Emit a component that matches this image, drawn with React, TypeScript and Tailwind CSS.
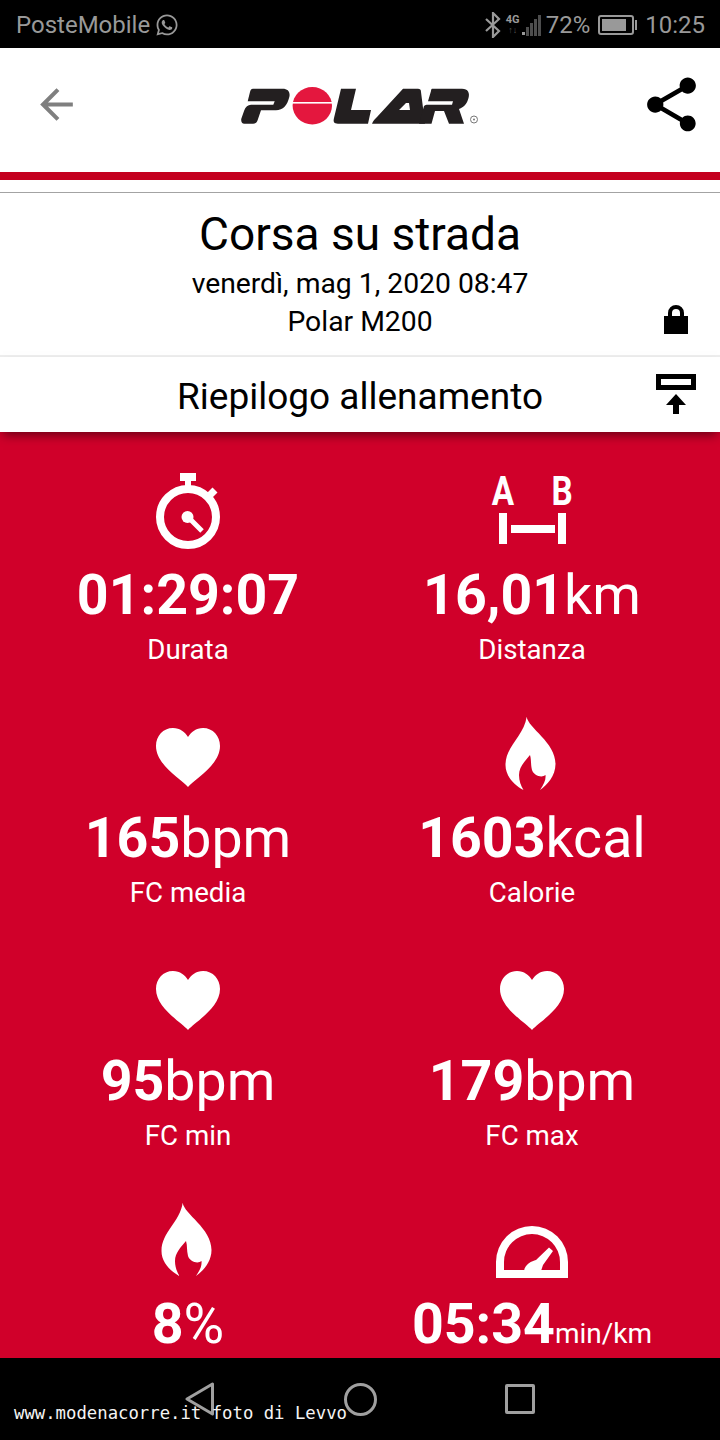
import React from 'react';
import { FaWhatsapp } from 'react-icons/fa';

const Stopwatch = () => (
  <svg viewBox="0 0 80 80" className="w-20 h-20" fill="none">
    <circle cx="40" cy="46" r="28" stroke="white" strokeWidth="8" />
    <rect x="32" y="2" width="16" height="8" fill="white" />
    <rect x="37" y="9" width="6" height="9" fill="white" />
    <path d="M60 26l7-7" stroke="white" strokeWidth="7" />
    <circle cx="39.500" cy="46" r="6" fill="white" />
    <path d="M40 46l14 14" stroke="white" strokeWidth="5" />
  </svg>
);

const Distance = () => (
  <svg viewBox="0 0 80 80" className="w-20 h-20 overflow-visible">
    <text transform="translate(11 34) scale(0.9 1.1)" textAnchor="middle" fill="white" fontFamily="Roboto, sans-serif" fontWeight="700" fontSize="37">A</text>
    <text transform="translate(70 34) scale(0.9 1.1)" textAnchor="middle" fill="white" fontFamily="Roboto, sans-serif" fontWeight="700" fontSize="37">B</text>
    <rect x="7" y="42" width="8" height="31" fill="white" />
    <rect x="66" y="42" width="8" height="31" fill="white" />
    <rect x="19" y="54" width="44" height="8" fill="white" />
  </svg>
);

const Heart = () => (
  <svg viewBox="0 0 80 80" className="w-20 h-20">
    <path fill="white" d="M40 73C33 65 8 51 8 32C8 22 15 14 25 14C32 14 37 18 40 23C43 18 48 14 55 14C65 14 72 22 72 32C72 51 47 65 40 73Z" />
  </svg>
);

const Flame = () => (
  <svg viewBox="0 0 80 80" className="w-20 h-20">
    <path fill="white" d="M34.700 2.700C36 14 63.500 28 63.500 50C63.500 62 55 71 48 76C52 70 54 66 53.500 61C50 64 42 62 40 56C38.500 50 39.500 46 38 41C33 47 27 53 27 61C27 67 29 72 31.500 76C22 71 13.500 62 13.500 51C13.500 32 32 22 34.700 2.700Z" />
  </svg>
);

const Gauge = () => (
  <svg viewBox="0 0 80 80" className="w-20 h-20">
    <path fill="white" fillRule="evenodd" d="M4 78V62A36 36 0 0 1 76 62V78ZM12 70H68V62A28 28 0 0 0 12 62Z" />
    <path fill="white" d="M32 71C33 64 40 61 44 60L57 47.500L61 51L51 65L49 71Z" />
  </svg>
);

const PolarLogo = () => (
  <svg viewBox="0 0 240 40" className="w-[240px] h-10 mt-1">
    <path
      fill="#231f20"
      d="M11 2.700H42.700C48 2.700 50.500 6 49.300 11C47.500 19 43 24.300 36 24.300H21L17.500 34.500C16.700 37 15 37.700 13 37.700H4.300C2 37.700 .8 35.500 1.300 32.700L4.300 24.300C5.500 21 8 18.700 11 18.700H33.300L34.700 15.300H7.700L10 6C10.500 4 11 2.700 13 2.700Z"
    />
    <ellipse cx="72.300" cy="19.700" rx="19.700" ry="18.700" fill="#e4173e" />
    <rect x="51" y="16" width="43" height="1.600" fill="white" />
    <path fill="#231f20" d="M101 2.700H116L111 24H131L128 37.700H98C94 37.700 93 36 94 32Z" />
    <path
      fill="#231f20"
      fillRule="evenodd"
      d="M163 2.700H178C180 2.700 181 3.500 181 6L185 37.700H132C133 35 135 33 137 31ZM166 17L159 24H170L169 17Z"
    />
    <path
      fill="#231f20"
      d="M192 2.700H222C228 2.700 230 7 228.500 12C227 18 224 21 219 23L224 37.700H209L204 25H195L191.500 37.700H179L184 20C185 19 186 18.700 188 18.700H212L213 15.300H188L191 5C191 4 191.500 2.700 192 2.700Z"
    />
    <circle cx="234" cy="33.500" r="3.500" fill="none" stroke="#777" strokeWidth="1" />
    <circle cx="234" cy="33.500" r="1" fill="#777" />
  </svg>
);

const stats = [
  { icon: <Stopwatch />, value: '01:29:07', unit: '', label: 'Durata' },
  { icon: <Distance />, value: '16,01', unit: 'km', label: 'Distanza' },
  { icon: <Heart />, value: '165', unit: 'bpm', label: 'FC media' },
  { icon: <Flame />, value: '1603', unit: 'kcal', label: 'Calorie' },
  { icon: <Heart />, value: '95', unit: 'bpm', label: 'FC min' },
  { icon: <Heart />, value: '179', unit: 'bpm', label: 'FC max' },
  { icon: <Flame />, value: '8', unit: '%' },
  { icon: <Gauge />, value: '05:34', unit: 'min/km', small: true },
];

const Stat = ({ icon, value, unit, small, label }: { icon: React.ReactNode; value: string; unit: string; small?: boolean; label?: string }) => (
  <div className="h-[243px] flex flex-col items-center text-white">
    {icon}
    <div className="mt-3 h-[66px] leading-[66px] text-[55.500px] whitespace-nowrap">
      <span className="font-bold">{value}</span>
      <span className={small ? 'text-[28px]' : ''}>{unit}</span>
    </div>
    {label && <div className="mt-1 h-[34px] leading-[34px] text-[27.700px]">{label}</div>}
  </div>
);

const StatusBar = () => (
  <div className="h-12 shrink-0 bg-black flex items-center justify-between pl-[16px] pr-[15px] pt-px text-[24px] text-[#999]">
    <div className="flex items-center gap-[5px]">
      <span>PosteMobile</span>
      <FaWhatsapp className="w-6 h-6" />
    </div>
    <div className="flex items-center">
      <svg viewBox="0 0 16 26" className="w-4 h-[26px]" fill="none" stroke="#999" strokeWidth="2.200">
        <path d="M1 7l13 12-6 6V1l6 6L1 19" />
      </svg>
      <div className="ml-[5px] w-[14px] flex flex-col items-center leading-none">
        <span className="text-[11px] font-bold leading-[12px]">4G</span>
        <span className="text-[9px] leading-[9px] text-[#555]">↑↓</span>
      </div>
      <svg viewBox="0 0 20 24" className="ml-[2px] w-5 h-6">
        <rect x="0" y="19" width="3" height="3" fill="#999" />
        <rect x="4" y="14" width="3" height="9" fill="#4d4d4d" />
        <rect x="8" y="10" width="3" height="13" fill="#4d4d4d" />
        <rect x="12" y="6" width="3" height="17" fill="#4d4d4d" />
        <rect x="16" y="2" width="3" height="21" fill="#4d4d4d" />
      </svg>
      <span className="ml-[4px]">72%</span>
      <div className="ml-2 flex items-center">
        <div className="w-[36px] h-[20px] rounded-[3px] border-2 border-[#999] p-[2px]">
          <div className="w-[24px] h-full bg-[#999]" />
        </div>
        <div className="ml-[1px] w-[2px] h-[10px] bg-[#999]" />
      </div>
      <span className="ml-2">10:25</span>
    </div>
  </div>
);

const App = () => {
  return (
    <div className="relative w-[720px] h-[1440px] flex flex-col overflow-hidden bg-white font-['Roboto',sans-serif]">
      <StatusBar />

      <header className="h-[124px] shrink-0 flex items-center justify-between pl-8 pr-4 pb-3">
        <svg viewBox="0 0 24 24" className="w-[49px] h-[49px]" fill="#7f7f7f">
          <path d="M20 11H7.830l5.590-5.590L12 4l-8 8 8 8 1.410-1.410L7.830 13H20v-2z" />
        </svg>
        <PolarLogo />
        <svg viewBox="0 0 24 24" className="w-[65px] h-[65px]" fill="#000">
          <path d="M18 16.080c-.76 0-1.440.3-1.960.77L8.910 12.700c.05-.23.09-.46.09-.7s-.04-.47-.09-.7l7.050-4.110c.54.5 1.250.81 2.040.81 1.660 0 3-1.340 3-3s-1.340-3-3-3-3 1.340-3 3c0 .24.04.47.09.7L8.040 9.810C7.500 9.310 6.790 9 6 9c-1.660 0-3 1.340-3 3s1.340 3 3 3c.79 0 1.500-.31 2.040-.81l7.120 4.160c-.05.21-.08.43-.08.65 0 1.610 1.310 2.920 2.920 2.920 1.610 0 2.920-1.310 2.920-2.920s-1.310-2.920-2.920-2.920z" />
        </svg>
      </header>

      <div className="h-2 shrink-0 bg-[#c4001f]" />
      <div className="h-3 shrink-0" />
      <div className="h-px shrink-0 bg-[#a3a3a3]" />

      <section className="relative h-[164px] shrink-0 flex flex-col items-center text-black border-b-2 border-[#eeeeee]">
        <h1 className="mt-[14px] text-[46px] leading-[54px]">Corsa su strada</h1>
        <p className="mt-[5px] text-[28.300px] leading-[36px]">venerdì, mag 1, 2020 08:47</p>
        <p className="mt-[2px] text-[28.300px] leading-[36px]">Polar M200</p>
        <svg viewBox="0 0 24 30" className="absolute right-8 top-[111px] w-6 h-[30px]">
          <path fill="none" stroke="#000" strokeWidth="4" d="M6 13V9a6 6 0 0 1 12 0v4" />
          <rect x="0" y="12" width="24" height="18" fill="#000" />
        </svg>
      </section>

      <section className="relative z-10 h-[75px] shrink-0 bg-white flex items-center justify-center pt-1 shadow-[0_6px_10px_-3px_rgba(0,0,0,0.5)]">
        <h2 className="text-[37px] leading-none text-black">Riepilogo allenamento</h2>
        <svg viewBox="0 0 40 40" className="absolute right-6 top-[17px] w-10 h-10">
          <path fill="#000" fillRule="evenodd" d="M0 0H40V16H0ZM5 5V11H35V5Z" />
          <path fill="#000" d="M20 20L30 31H23V40H17V31H10Z" />
        </svg>
      </section>

      <main className="flex-1 min-h-0 overflow-hidden bg-[#d0002a] px-4 pt-[39px]">
        <div className="grid grid-cols-2">
          {stats.map((s) => (
            <Stat key={s.value} {...s} />
          ))}
        </div>
      </main>

      <nav className="h-[82px] shrink-0 bg-black flex items-center justify-center">
        <div className="w-40 flex justify-center">
          <svg viewBox="0 0 30 34" className="w-[30px] h-[34px]" fill="none" stroke="#a0a0a0" strokeWidth="3" strokeLinejoin="round">
            <path d="M27.500 2V32L2 17Z" />
          </svg>
        </div>
        <div className="w-40 flex justify-center">
          <div className="w-[33px] h-[33px] rounded-full border-[3px] border-[#a0a0a0]" />
        </div>
        <div className="w-40 flex justify-center">
          <div className="w-[30px] h-[30px] rounded-[2px] border-[3px] border-[#a0a0a0]" />
        </div>
      </nav>

      <div className="absolute left-[14px] top-[1401px] text-[17.300px] leading-6 text-[#f4f4f4] font-['DejaVu_Sans_Mono',monospace] whitespace-nowrap">
        www.modenacorre.it foto di Levvo
      </div>
    </div>
  );
};

export default App;
